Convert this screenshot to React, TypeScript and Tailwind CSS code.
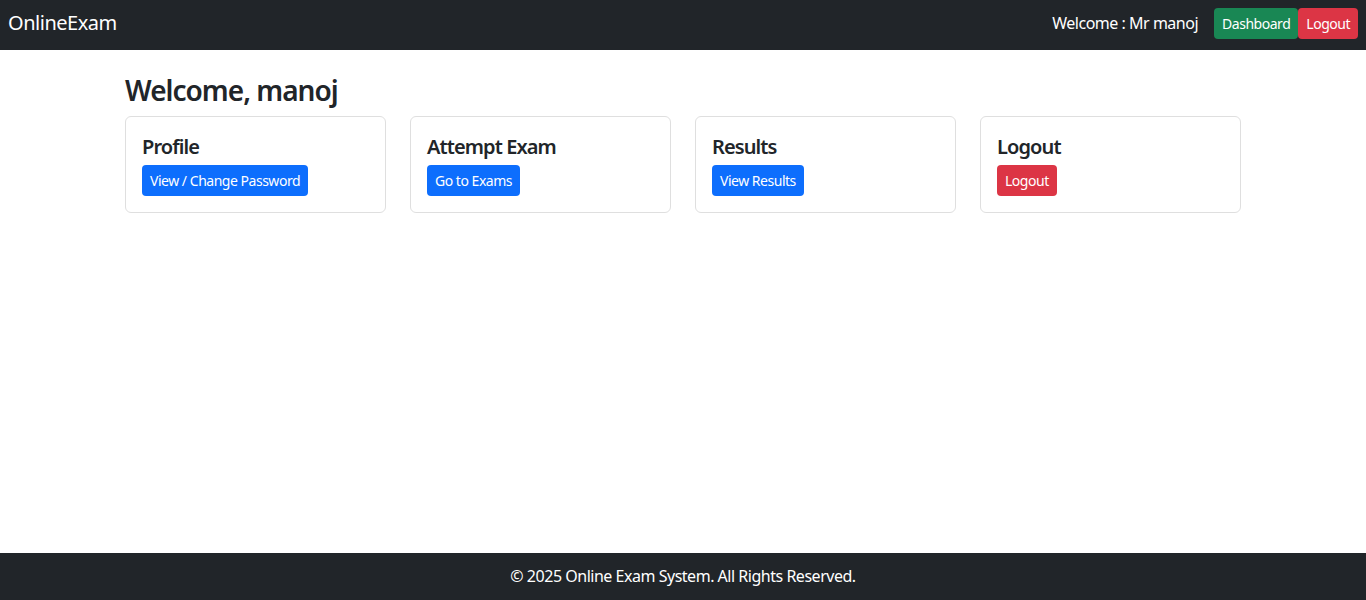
import React from 'react';

const cards = [
  { title: 'Profile', label: 'View / Change Password', tone: 'bg-[#0d6efd]' },
  { title: 'Attempt Exam', label: 'Go to Exams', tone: 'bg-[#0d6efd]' },
  { title: 'Results', label: 'View Results', tone: 'bg-[#0d6efd]' },
  { title: 'Logout', label: 'Logout', tone: 'bg-[#dc3545]' },
];

const App: React.FC = () => {
  return (
    <div className="min-h-screen flex flex-col bg-white text-[#212529] font-['Noto_Sans',sans-serif] tracking-[-0.03em]">
      <nav className="h-[50px] bg-[#212529] flex items-center justify-between px-2 pb-1">
        <span className="text-white text-[20px] leading-none">OnlineExam</span>
        <div className="flex items-center">
          <span className="text-white text-base mr-4">Welcome : Mr manoj</span>
          <button className="bg-[#198754] text-white text-sm leading-[21px] px-2 py-[5px] rounded">Dashboard</button>
          <button className="bg-[#dc3545] text-white text-sm leading-[21px] px-2 py-[5px] rounded">Logout</button>
        </div>
      </nav>

      <main className="flex-1">
        <div className="w-[1140px] mx-auto px-3 pt-6">
          <h3 className="text-[28px] font-semibold leading-[1.2] tracking-[-0.035em] mb-2">Welcome, manoj</h3>
          <div className="grid grid-cols-4 gap-6">
            {cards.map(c => (
              <div key={c.title} className="border border-[#dfdfdf] rounded-md p-4">
                <h5 className="text-[20px] font-semibold leading-[1.2] tracking-[-0.045em] pt-[2px] mb-[6px]">{c.title}</h5>
                <button className={`${c.tone} text-white text-sm leading-[21px] px-2 py-[5px] rounded`}>{c.label}</button>
              </div>
            ))}
          </div>
        </div>
      </main>

      <footer className="h-[47px] bg-[#212529] text-white flex items-center justify-center text-base pb-[2px]">
        © 2025 Online Exam System. All Rights Reserved.
      </footer>
    </div>
  );
};

export default App;
